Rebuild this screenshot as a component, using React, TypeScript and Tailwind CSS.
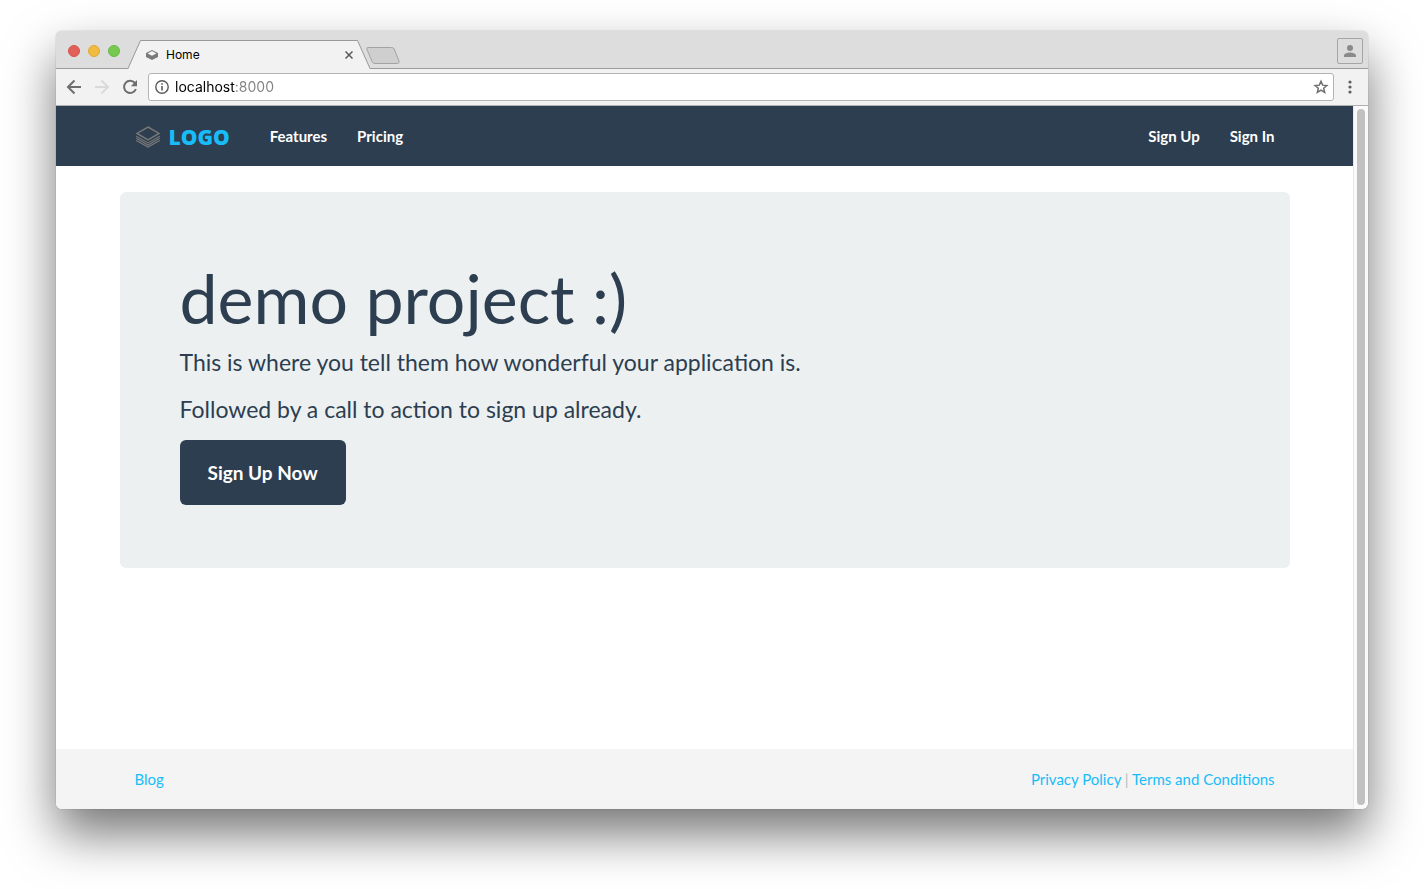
import type { ReactNode } from "react";

const lato = "font-['Lato','Open_Sans',sans-serif]";
const chromeFont = "font-['Inter','Roboto',sans-serif]";

function LayersLogo() {
  return (
    <svg width="26" height="22" viewBox="0 0 26 22" fill="none" stroke="#777777" strokeWidth="1.5" aria-hidden="true">
      <path d="M13 1 L24 7.4 L13 14 L2 7.4 Z" />
      <path d="M1.2 10.2 L13 16.9 L24.8 10.2" strokeWidth="1.2" />
      <path d="M1.2 12.3 L13 19 L24.8 12.3" strokeWidth="1.2" />
      <path d="M1.2 14.4 L13 21.1 L24.8 14.4" strokeWidth="1.2" />
    </svg>
  );
}

function Favicon() {
  return (
    <svg width="12" height="10" viewBox="0 0 12 10" aria-hidden="true">
      <path d="M6 0 L12 3 V7 L6 10 L0 7 V3 Z" fill="#7a7a7a" />
      <path d="M6 1.1 L10.4 3.4 L6 5.7 L1.6 3.4 Z" fill="#f5f5f5" />
    </svg>
  );
}

function TabStrip() {
  return (
    <div className="flex h-[38px] items-end border-b border-[#9b9b9b] bg-[#dddddd]">
      <div className="flex h-full w-[72px] shrink-0 items-center gap-2 pl-3 pt-0.5">
        <button aria-label="Close window" className="size-3 rounded-full border border-[#d5534d] bg-[#e2605a]" />
        <button aria-label="Minimize window" className="size-3 rounded-full border border-[#dfa935] bg-[#f0bc40]" />
        <button aria-label="Zoom window" className="size-3 rounded-full border border-[#68b846] bg-[#76ca50]" />
      </div>
      <div className="-mb-px flex h-[29px]">
        <svg width="13" height="29" viewBox="0 0 13 29" aria-hidden="true">
          <path d="M0 29 L12.5 0.5 H13 V29 Z" fill="#f2f2f2" />
          <path d="M0 28.5 L12.5 0.5 H13" fill="none" stroke="#999999" />
        </svg>
        <div className="flex w-[216px] items-center border-t border-[#999999] bg-[#f2f2f2] pl-[5px]">
          <Favicon />
          <span className="grow pl-2 text-xs leading-4 text-black">Home</span>
          <button aria-label="Close tab" className="flex size-4 items-center justify-center">
            <svg width="8" height="8" viewBox="0 0 8 8" aria-hidden="true">
              <path d="M0.5 0.5 L7.5 7.5 M7.5 0.5 L0.5 7.5" stroke="#5a5a5a" strokeWidth="1.5" />
            </svg>
          </button>
        </div>
        <svg width="13" height="29" viewBox="0 0 13 29" aria-hidden="true">
          <path d="M0 0.5 H0.5 L13 29 H0 Z" fill="#f2f2f2" />
          <path d="M0 0.5 H0.5 L13 28.5" fill="none" stroke="#999999" />
        </svg>
      </div>
      <button aria-label="New tab" className="-ml-1 mb-1">
        <svg width="34" height="17" viewBox="0 0 34 17" className="block" aria-hidden="true">
          <path d="M2 0.5 H25.5 Q27.5 0.5 28.2 2 L33 14 Q33.6 16.5 31.5 16.5 H9 Q7 16.5 6.2 14.8 L0.8 2.2 Q0.4 0.5 2 0.5 Z" fill="#cfcfcf" stroke="#a3a3a3" />
        </svg>
      </button>
      <button aria-label="Profile" className="mb-1 ml-auto mr-[5px] flex h-[26px] w-[26px] items-center justify-center rounded-xs border border-[#a5a5a5]">
        <svg width="12" height="12" viewBox="0 0 12 12" fill="#8a8a8a" aria-hidden="true">
          <circle cx="6" cy="3" r="3" />
          <path d="M0 12 V10.6 C0 8.6 3.5 7.6 6 7.6 S12 8.6 12 10.6 V12 Z" />
        </svg>
      </button>
    </div>
  );
}

function Toolbar() {
  return (
    <div className="flex h-[37px] items-center border-b border-[#b0b0b0] bg-[#f2f2f2] pl-2.5">
      <button aria-label="Back" className="mr-3">
        <svg width="16" height="16" viewBox="0 0 16 16" fill="none" stroke="#6e6e6e" strokeWidth="2" aria-hidden="true">
          <path d="M15 8 H2.5 M8.5 1.5 L2 8 L8.5 14.5" />
        </svg>
      </button>
      <button aria-label="Forward" className="mr-3">
        <svg width="16" height="16" viewBox="0 0 16 16" fill="none" stroke="#dadada" strokeWidth="2" aria-hidden="true">
          <path d="M1 8 H13.5 M7.5 1.5 L14 8 L7.5 14.5" />
        </svg>
      </button>
      <button aria-label="Reload" className="mr-2.5">
        <svg width="16" height="16" viewBox="0 0 16 16" aria-hidden="true">
          <path d="M12.9 4 A6.1 6.1 0 1 0 13.9 10" fill="none" stroke="#6e6e6e" strokeWidth="2" />
          <path d="M15 1 V7.2 H8.8 Z" fill="#6e6e6e" />
        </svg>
      </button>
      <div className="flex h-7 grow items-center rounded-[3px] border border-[#b3b3b3] bg-white pl-1.5 pr-1">
        <svg width="14" height="14" viewBox="0 0 14 14" aria-hidden="true">
          <circle cx="7" cy="7" r="6.2" fill="none" stroke="#5a5a5a" strokeWidth="1.4" />
          <path d="M6.2 6 H7.8 V10.6 H6.2 Z M6.2 3.2 H7.8 V4.8 H6.2 Z" fill="#5a5a5a" />
        </svg>
        <input
          aria-label="Address"
          defaultValue="localhost:8000"
          className="ml-1.5 min-w-0 grow bg-[linear-gradient(to_right,#000000_60px,#808080_60px)] bg-clip-text text-sm leading-5 text-transparent outline-none"
        />
        <button aria-label="Bookmark this page">
          <svg width="16" height="16" viewBox="0 0 24 24" aria-hidden="true">
            <path d="M12 3.4 L14.5 9.2 L20.8 9.8 L16 13.9 L17.5 20.1 L12 16.8 L6.5 20.1 L8 13.9 L3.2 9.8 L9.5 9.2 Z" fill="none" stroke="#6e6e6e" strokeWidth="2.2" />
          </svg>
        </button>
      </div>
      <button aria-label="Menu" className="flex w-[34px] justify-center pr-0.5">
        <svg width="4" height="14" viewBox="0 0 4 14" fill="#5f5f5f" aria-hidden="true">
          <circle cx="2" cy="2" r="1.6" />
          <circle cx="2" cy="7" r="1.6" />
          <circle cx="2" cy="12" r="1.6" />
        </svg>
      </button>
    </div>
  );
}

function Container({ children }: { children: ReactNode }) {
  return <div className="mx-auto flex w-full max-w-[1170px] items-center px-[15px]">{children}</div>;
}

function Navbar() {
  return (
    <header className="flex h-[60px] bg-[#2c3e50] text-[15px] font-bold leading-5 text-white">
      <Container>
        <a href="#" className="mr-10 flex items-center gap-2 pt-0.5">
          <LayersLogo />
          <span className="font-['Open_Sans','Noto_Sans',sans-serif] text-[21px] font-extrabold leading-6 text-[#18bcf8]">LOGO</span>
        </a>
        <nav className="flex grow gap-[30px]">
          <a href="#features">Features</a>
          <a href="#pricing">Pricing</a>
          <a href="#sign-up" className="ml-auto">Sign Up</a>
          <a href="#sign-in">Sign In</a>
        </nav>
      </Container>
    </header>
  );
}

function Hero() {
  return (
    <section className="mx-auto mt-[26px] w-full max-w-[1170px] rounded-md bg-[#ecf0f1] px-[60px] pb-[63px] pt-[68px] text-[23px] leading-[33px] text-[#2c3e50]">
      <h1 className="mb-[11px] text-[68px] leading-[75px]">demo project :)</h1>
      <p className="mb-3.5">This is where you tell them how wonderful your application is.</p>
      <p className="mb-3.5">Followed by a call to action to sign up already.</p>
      <button className="block rounded-md bg-[#2c3e50] px-7 py-5 text-[19px] font-bold leading-[25px] text-white">
        Sign Up Now
      </button>
    </section>
  );
}

function Footer() {
  return (
    <footer className="mt-auto flex h-[60px] bg-[#f4f4f4] text-[15px] leading-5 text-[#18bcf8]">
      <Container>
        <a href="#blog">Blog</a>
        <div className="ml-auto text-[#b4bcc2]">
          <a href="#privacy" className="text-[#18bcf8]">Privacy Policy</a>
          {" | "}
          <a href="#terms" className="text-[#18bcf8]">Terms and Conditions</a>
        </div>
      </Container>
    </footer>
  );
}

export default function App() {
  return (
    <div className="flex min-h-screen bg-white px-14 pb-20 pt-[31px]">
      <div className="flex min-w-0 grow flex-col overflow-hidden rounded-md shadow-[0_25px_50px_rgba(0,0,0,0.54),0_0_1px_rgba(0,0,0,0.5)]">
        <div className={chromeFont}>
          <TabStrip />
          <Toolbar />
        </div>
        <div className="flex grow">
          <div className={`flex min-w-0 grow flex-col bg-white ${lato}`}>
            <Navbar />
            <main>
              <Hero />
            </main>
            <Footer />
          </div>
          <div className="flex w-[15px] shrink-0 border-l border-[#e8e8e8] bg-[#fafafa] pb-1 pl-[3px] pr-[3px] pt-[3px]">
            <div className="w-2 rounded-full bg-[#c1c1c1]" />
          </div>
        </div>
      </div>
    </div>
  );
}
